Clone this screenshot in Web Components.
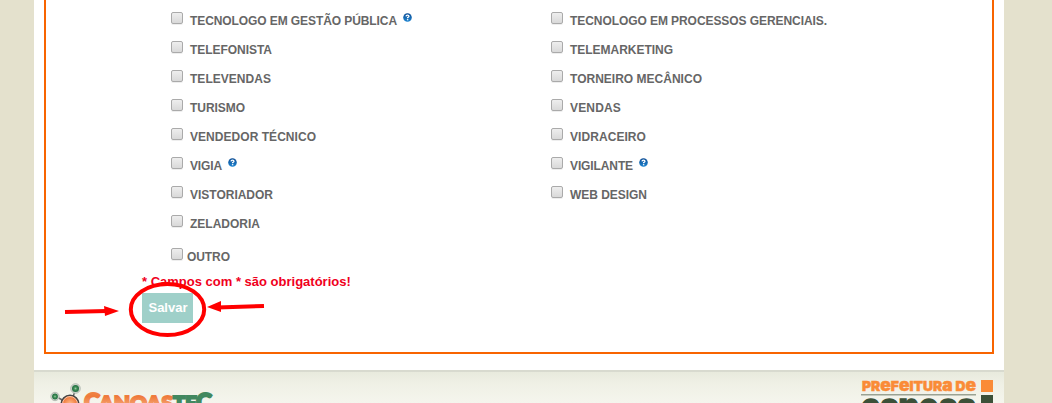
<!DOCTYPE html>
<html lang="pt-BR"><head><meta charset="utf-8"><title>Cadastro</title>
<style>html,body{margin:0;height:403px;overflow:hidden;background:#e4e1cd;font-family:"Liberation Sans",Arial,sans-serif}</style></head>
<body><page-shell></page-shell>
<script>
const define=(name,html,setup)=>customElements.define(name,class extends HTMLElement{
  connectedCallback(){if(this.shadowRoot)return;this.attachShadow({mode:'open'}).innerHTML=html;if(setup)setup(this,this.shadowRoot);}
});
define('help-icon',`<style>:host{display:block;width:9px;height:9px}svg{display:block}</style>
<svg width="9" height="9" viewBox="0 0 9 9"><defs><linearGradient id="g" x2="0" y2="1"><stop stop-color="#0b4b93"/><stop offset="1" stop-color="#1f86d2"/></linearGradient></defs><circle cx="4.5" cy="4.5" r="4.3" fill="url(#g)"/><path d="M3 3.4Q3.1 2.1 4.5 2.1T6 3.3Q6 4 4.6 4.7V5.3" fill="none" stroke="#fff" stroke-width="1.3"/><path d="M3.9 6.1h1.4v1.2H3.9z" fill="#fff"/></svg>`);
define('check-option',`<style>:host{display:flex;height:29px;color:#666;font:bold 12px/29px "Liberation Sans",Arial,sans-serif;white-space:nowrap}
.box{box-sizing:border-box;width:12px;height:12px;border:1px solid #aaa;border-radius:2px;background:linear-gradient(#eee,#d9d9d9);margin:6px 7px 0 0;box-shadow:0 1px 0 #eee;flex:none}
.text{padding-top:1px}
:host([tight]) .box{margin-right:4px}help-icon{margin:7px 0 0 6px}</style><span class="box"></span><span class="text"><slot></slot></span>`,
(host,root)=>{const n=host.textContent.length,s=host.getAttribute('span');
 if(host.hasAttribute('help'))root.append(document.createElement('help-icon'));
 if(s){const t=root.querySelector('.text');const w=t.getBoundingClientRect().width;t.style.letterSpacing=((s-w)/n)+'px';}});
define('option-grid',`<style>:host{display:grid;grid-template-columns:380px 380px;grid-auto-rows:29px;padding-left:125px}</style><slot></slot>`);
define('save-button',`<style>:host{display:block;position:relative;width:51px;height:30px}
button{display:block;width:51px;height:30px;border:0;padding:0 0 0 1px;background:#9fd0c9;color:#fff;font:bold 13px/30px "Liberation Sans",Arial,sans-serif}
svg{position:absolute;left:-82px;top:-18px;pointer-events:none}</style><button><slot></slot></button>
<svg width="210" height="70" viewBox="60 275 210 70"><g stroke="red" fill="none"><ellipse cx="167.500" cy="309.500" rx="36.700" ry="25.500" stroke-width="4"/><path d="M65 312L107 311" stroke-width="4"/><path d="M264 306L217 307.500" stroke-width="4"/></g><path d="M104 306L119 311L105 316zM221 301L207 307L221 312z" fill="red"/></svg>`);
define('canoastec-logo',`<style>:host,svg{display:block}</style><svg width="170" height="31" viewBox="46 372 170 31" overflow="hidden">
<defs><linearGradient id="o" gradientUnits="userSpaceOnUse" x1="0" x2="0" y1="391" y2="405"><stop stop-color="#f08548"/><stop offset=".4" stop-color="#ef7a3c"/><stop offset="1" stop-color="#f5a26f"/></linearGradient><radialGradient id="r"><stop stop-color="#9bcaa4"/><stop offset=".45" stop-color="#3d8b55"/><stop offset="1" stop-color="#216d40"/></radialGradient><radialGradient id="m"><stop stop-color="#ffbd8b"/><stop offset="1" stop-color="#ed6a2a"/></radialGradient></defs>
<path d="M75 391L73 397M57 397L64 401" stroke="#666" stroke-width="1.500"/><g fill="#d4d8d0" stroke="#aab2a9" stroke-width=".8"><circle cx="75.500" cy="388.500" r="4.800"/><circle cx="55" cy="396.500" r="4.200"/></g><g fill="url(#r)"><circle cx="75.500" cy="388.500" r="3.500"/><circle cx="55" cy="396.500" r="2.900"/></g><circle cx="70" cy="404" r="8.700" fill="url(#m)" stroke="#454545" stroke-width="1.600"/><circle cx="70" cy="404" r="7.500" fill="none" stroke="#fae6d9" stroke-width=".7"/>
<g font-family="Lato" font-weight="900" fill="url(#o)" stroke="url(#o)" stroke-width="2"><text x="84" y="411" font-size="25" textLength="16" lengthAdjust="spacingAndGlyphs">C</text><text x="99" y="411" font-size="20" textLength="74" lengthAdjust="spacingAndGlyphs">ANOAS</text></g><g font-family="Lato" font-weight="900" fill="#42885f" stroke="#42885f" stroke-width="2"><text x="173" y="411" font-size="20" textLength="24" lengthAdjust="spacingAndGlyphs">TE</text><text x="196" y="411" font-size="25" textLength="16" lengthAdjust="spacingAndGlyphs">C</text></g></svg>`);
define('city-logo',`<style>:host,svg{display:block}</style><svg width="140" height="31" viewBox="856 372 140 31" overflow="hidden">
<text x="862" y="391.300" font-family="Inter" font-weight="900" font-size="13.500" textLength="114" lengthAdjust="spacingAndGlyphs" fill="#fa8b37" stroke="#fa8b37" stroke-width=".5">PR<tspan font-size="17">e</tspan>F<tspan font-size="17">e</tspan>ITUR<tspan font-size="17">a</tspan> D<tspan font-size="17">e</tspan></text>
<path d="M981 380h12v12h-12z" fill="#fa8b37"/><path d="M861 394h115v1.500H861z" fill="#9aa293"/><path d="M981 395h12v8h-12z" fill="#3c5038"/>
<text x="861" y="418.500" font-family="Inter" font-weight="900" font-size="36" textLength="115" lengthAdjust="spacingAndGlyphs" fill="#3c5038" stroke="#3c5038" stroke-width="1.500">canoas</text></svg>`);
define('page-footer',`<style>:host{display:flex;justify-content:space-between;box-sizing:border-box;height:33px;border-top:2px solid #d8dacf;background:linear-gradient(#e8eadd,#eff0e5 35%,#f5f5ed);padding:0 8px 0 12px}</style><canoastec-logo></canoastec-logo><city-logo></city-logo>`);
define('page-shell',`<style>:host{display:block;width:970px;height:403px;margin-left:34px;background:#fff;overflow:hidden}
main{box-sizing:border-box;height:354px;margin:0 10px 16px;border:2px solid #f86400;border-top:0;padding-top:6px}
.other{margin:4px 0 0 125px}.note{margin:3px 0 3px 96px;height:16px;font:bold 13px/16px "Liberation Sans",Arial,sans-serif;color:#f0001c;white-space:nowrap}save-button{margin-left:96px}</style>
<main><option-grid>
<check-option span="207" help>TECNOLOGO EM GESTÃO PÚBLICA</check-option><check-option span="257">TECNOLOGO EM PROCESSOS GERENCIAIS.</check-option>
<check-option span="82">TELEFONISTA</check-option><check-option span="103">TELEMARKETING</check-option>
<check-option span="81">TELEVENDAS</check-option><check-option span="132">TORNEIRO MECÂNICO</check-option>
<check-option span="55">TURISMO</check-option><check-option span="51">VENDAS</check-option>
<check-option span="126">VENDEDOR TÉCNICO</check-option><check-option span="76">VIDRACEIRO</check-option>
<check-option span="32" help>VIGIA</check-option><check-option span="63" help>VIGILANTE</check-option>
<check-option span="83">VISTORIADOR</check-option><check-option span="77">WEB DESIGN</check-option>
<check-option span="70">ZELADORIA</check-option></option-grid>
<check-option class="other" tight span="43">OUTRO</check-option><div class="note">* Campos com * são obrigatórios!</div><save-button>Salvar</save-button></main><page-footer></page-footer>`);
</script></body></html>
